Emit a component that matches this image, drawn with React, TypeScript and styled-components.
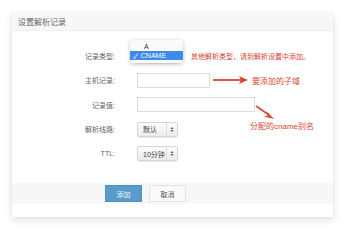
import React from 'react';
import styled, { createGlobalStyle } from 'styled-components';

const GlobalStyle = createGlobalStyle`
  html, body {
    margin: 0;
    padding: 0;
    background: #fff;
  }
  body {
    font-family: 'Liberation Sans', 'Noto Sans CJK SC', sans-serif;
  }
`;

const Page = styled.div`
  width: 345px;
  height: 229px;
  padding: 13px 12px 0 12px;
  box-sizing: border-box;
`;

const Panel = styled.div`
  width: 321px;
  background: #fff;
  box-shadow: 0 3px 8px rgba(0, 0, 0, 0.12), 0 0 3px rgba(0, 0, 0, 0.05);
  padding-bottom: 13px;
`;

const Header = styled.div`
  height: 17px;
  background: #f7f7f7;
  display: flex;
  align-items: center;
  padding-left: 6px;
  font-size: 8px;
  color: #666;
`;

const Body = styled.div`
  padding: 17px 0 22px 0;
  display: grid;
  grid-template-columns: 103px 1fr;
  column-gap: 22px;
  row-gap: 9.5px;
  border-top: 1px solid #f0f0f0;
`;

const Label = styled.div`
  height: 15px;
  display: flex;
  align-items: center;
  justify-content: flex-end;
  font-size: 7px;
  color: #666;
`;

const Control = styled.div`
  position: relative;
  height: 15px;
  display: flex;
  align-items: center;
`;

const Input = styled.div<{ $w: number }>`
  flex: none;
  width: ${(p) => p.$w}px;
  height: 15px;
  box-sizing: border-box;
  border: 1px solid #dcdcdc;
  background: #fff;
`;

const Select = styled.div`
  flex: none;
  width: 41px;
  height: 15px;
  box-sizing: border-box;
  border: 1px solid #d4d4d4;
  border-radius: 2px;
  background: linear-gradient(#fdfdfd, #ececec);
  display: flex;
  align-items: center;
  font-size: 7px;
  color: #444;
  box-shadow: 0 1px 1px rgba(0, 0, 0, 0.08);
`;

const SelectText = styled.span`
  flex: 1;
  padding-left: 5px;
  white-space: nowrap;
`;

const SelectArrows = styled.span`
  flex: none;
  width: 10px;
  height: 100%;
  border-left: 1px solid #dadada;
  display: flex;
  align-items: center;
  justify-content: center;
`;

const Menu = styled.div`
  position: absolute;
  left: -7px;
  top: -8px;
  width: 53px;
  padding: 2px 0 3px;
  background: #fafafa;
  border-radius: 3px;
  box-shadow: 0 1px 4px rgba(0, 0, 0, 0.25);
  font-size: 7px;
  z-index: 2;
`;

const MenuItem = styled.div<{ $active?: boolean }>`
  height: 9px;
  display: flex;
  align-items: center;
  padding-left: ${(p) => (p.$active ? '3px' : '14px')};
  background: ${(p) => (p.$active ? '#3d8ae8' : 'transparent')};
  color: ${(p) => (p.$active ? '#fff' : '#333')};
  gap: 3px;
`;

const Note = styled.span<{ $ml?: number; $size?: number }>`
  margin-left: ${(p) => p.$ml ?? 0}px;
  font-size: ${(p) => p.$size ?? 7}px;
  color: #d64533;
  white-space: nowrap;
`;

const Annotation = styled.div`
  position: absolute;
  left: 113px;
  top: 23px;
  display: flex;
`;

const Footer = styled.div`
  height: 21px;
  background: #f7f7f7;
  display: flex;
  align-items: center;
  padding-left: 93px;
  gap: 7px;
`;

const Button = styled.div<{ $primary?: boolean }>`
  width: 37px;
  height: 17px;
  box-sizing: border-box;
  display: flex;
  align-items: center;
  justify-content: center;
  font-size: 7px;
  background: ${(p) => (p.$primary ? '#5b9bcb' : '#f9f9f9')};
  color: ${(p) => (p.$primary ? '#e8f1f8' : '#555')};
  border: 1px solid ${(p) => (p.$primary ? '#4f8fc0' : '#e3e3e3')};
`;

const UpDown = () => (
  <svg width="4" height="7" viewBox="0 0 4 7">
    <path d="M0.5 3 L2 1 L3.5 3 Z M0.5 4 L2 6 L3.5 4 Z" fill="#555" />
  </svg>
);

const ArrowRight = () => (
  <svg width="36" height="10" viewBox="0 0 36 10" style={{ marginLeft: 3, flex: 'none' }}>
    <path d="M0 5 L28 5" stroke="#d44a36" strokeWidth="1.8" />
    <path d="M26 1 L35 5 L26 9 L28 5 Z" fill="#d44a36" />
  </svg>
);

const ArrowDiag = () => (
  <svg
    width="22"
    height="16"
    viewBox="0 0 22 16"
    style={{ position: 'absolute', left: 118, top: 8 }}
  >
    <path d="M1 1 L14 10" stroke="#d44a36" strokeWidth="1.6" />
    <path d="M11.5 6 L19 14 L9 11.5 L13.8 10 Z" fill="#d44a36" />
  </svg>
);

const App = () => (
  <Page>
    <GlobalStyle />
    <Panel>
      <Header>设置解析记录</Header>
      <Body>
        <Label>记录类型:</Label>
        <Control>
          <Select />
          <Menu>
            <MenuItem>A</MenuItem>
            <MenuItem $active>
              <span>✓</span>
              <span>CNAME</span>
            </MenuItem>
          </Menu>
          <Note $ml={13}>其他解析类型，请到解析设置中添加。</Note>
        </Control>

        <Label>主机记录:</Label>
        <Control>
          <Input $w={73} />
          <ArrowRight />
          <Note $ml={3} $size={8}>要添加的子域</Note>
        </Control>

        <Label>记录值:</Label>
        <Control>
          <Input $w={118} />
          <ArrowDiag />
          <Annotation>
            <Note $size={8}>分配的cname别名</Note>
          </Annotation>
        </Control>

        <Label>解析线路:</Label>
        <Control>
          <Select>
            <SelectText>默认</SelectText>
            <SelectArrows>
              <UpDown />
            </SelectArrows>
          </Select>
        </Control>

        <Label>TTL:</Label>
        <Control>
          <Select>
            <SelectText>10分钟</SelectText>
            <SelectArrows>
              <UpDown />
            </SelectArrows>
          </Select>
        </Control>
      </Body>
      <Footer>
        <Button $primary>添加</Button>
        <Button>取消</Button>
      </Footer>
    </Panel>
  </Page>
);

export default App;
